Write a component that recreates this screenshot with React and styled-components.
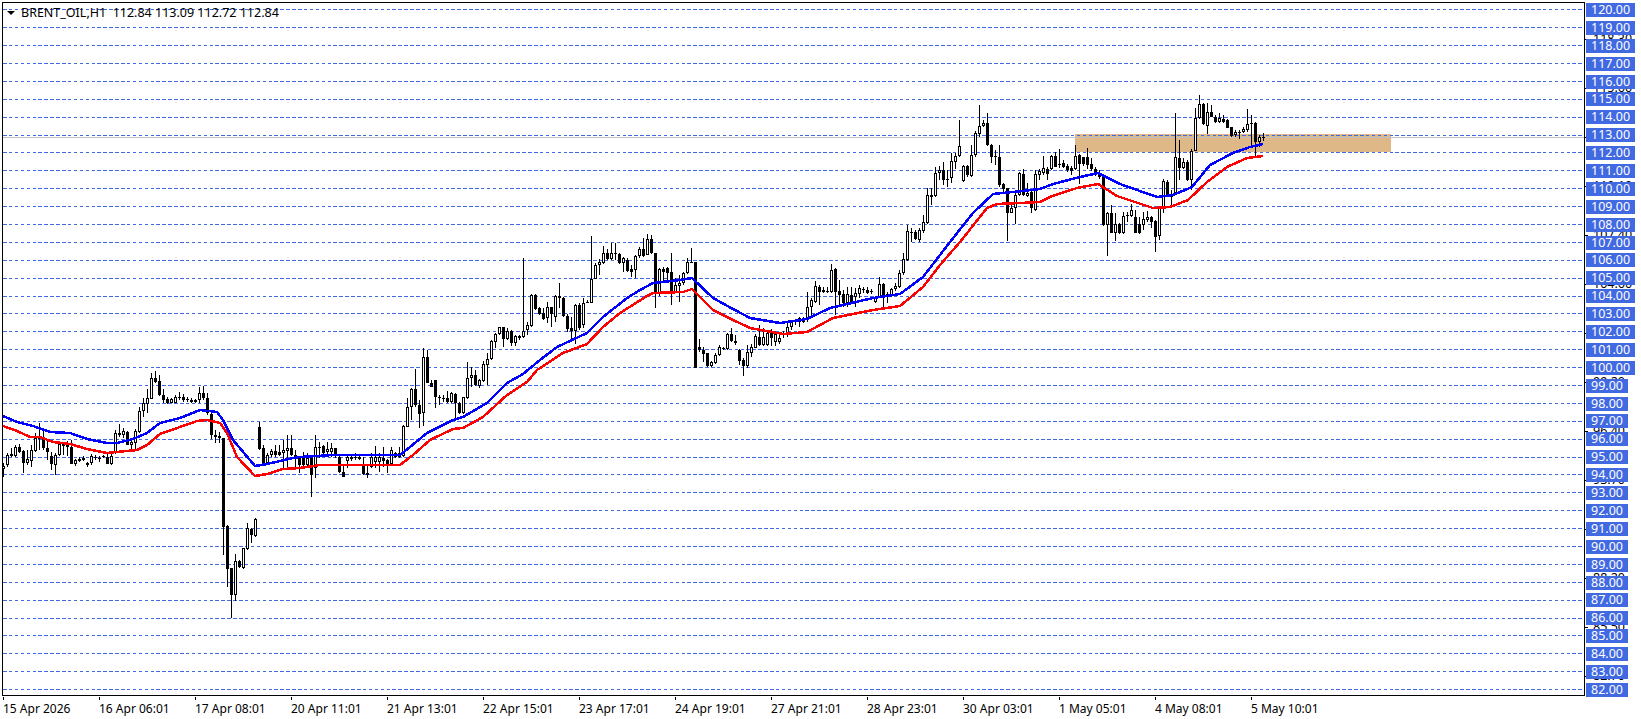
import React from 'react';
import styled, { createGlobalStyle } from 'styled-components';

const GlobalStyle = createGlobalStyle`
  html, body {
    margin: 0;
    padding: 0;
    background: #fff;
  }
`;

const Page = styled.div`
  width: 1641px;
  height: 719px;
  overflow: hidden;
  font-family: "Noto Sans", "Liberation Sans", sans-serif;
  font-size: 12.5px;
  color: #000;
`;

const ChartRow = styled.div`
  display: flex;
  align-items: flex-start;
  padding: 2px 0 0 2px;
`;

const ChartPane = styled.div`
  position: relative;
  flex: none;
  width: 1583px;
  height: 694px;
  box-sizing: border-box;
  border: 1px solid #000;
  overflow: hidden;
`;

const ChartSvg = styled.svg`
  display: block;
`;

const Legend = styled.div`
  position: absolute;
  top: 1px;
  left: 4px;
  display: flex;
  align-items: center;
  gap: 6px;
  height: 18px;
  line-height: 18px;
  white-space: pre;
`;

const LegendArrow = styled.span`
  width: 0;
  height: 0;
  border-left: 4px solid transparent;
  border-right: 4px solid transparent;
  border-top: 4px solid #000;
`;

const PriceAxis = styled.div`
  position: relative;
  flex: none;
  display: flex;
  flex-direction: column;
  justify-content: space-between;
  align-items: flex-start;
  box-sizing: border-box;
  height: 695px;
  margin-left: 1px;
  padding-top: 1px;
`;

const PriceLabel = styled.span`
  position: relative;
  height: 14px;
  line-height: 14px;
  padding: 0 5px;
  background: #4169e1;
  color: #fff;
`;

const ScaleValue = styled.span`
  position: absolute;
  left: 7px;
  line-height: 14px;
  transform: translateY(-7px);

  &::before {
    content: '';
    position: absolute;
    left: -8px;
    top: 7px;
    width: 3px;
    height: 1px;
    background: #000;
  }
`;

const TimeAxis = styled.div`
  display: flex;
  padding-left: 3px;
  font-size: 12px;
`;

const TimeCell = styled.div`
  flex: none;
  width: 96px;
  padding-top: 3px;
  line-height: 17px;
  white-space: nowrap;
  position: relative;

  &::before {
    content: '';
    position: absolute;
    left: 0;
    top: 0;
    width: 1px;
    height: 3px;
    background: #000;
  }
`;

const PRICES = Array.from({ length: 39 }, (_, i) => 120 - i);
const SCALE = ['118.30', '115.60', '112.90', '110.10', '107.40', '104.60', '101.90', '99.20', '96.40', '93.70', '90.90', '88.20', '85.50', '82.70'];
const TIMES = [
  '15 Apr 2026', '16 Apr 06:01', '17 Apr 08:01', '20 Apr 11:01', '21 Apr 13:01', '22 Apr 15:01', '23 Apr 17:01',
  '24 Apr 19:01', '27 Apr 21:01', '28 Apr 23:01', '30 Apr 03:01', '1 May 05:01', '4 May 08:01', '5 May 10:01',
];

// candles as [high, bodyTop, bodyBottom, low, up], read off the chart in thirds of a pixel below y0
const BLOCKS = [
  { start: 0, y0: 370, rows: [
    [280,288,296,320,1],[250,255,285,290,1],[235,253,258,260,0],[225,230,258,260,1],[222,230,245,248,0],[240,243,278,308,0],
    [240,268,278,285,1],[225,240,272,290,1],[190,205,243,245,1],[160,203,206,240,1],[180,208,235,240,0],[210,235,245,270,0],
    [245,258,282,300,0],[250,255,285,315,1],[218,222,255,258,1],[215,222,227,255,0],[212,225,230,258,0],[210,232,282,282,0],
    [268,270,282,288,1],[262,266,273,275,1],[258,263,270,272,1],[275,280,285,292,0],[253,258,278,285,1],[255,262,264,270,1],
    [258,263,265,275,1],[255,258,262,265,0],[250,260,282,282,0],[250,258,282,285,1],[180,188,245,252,1],[162,190,194,200,1],
    [175,183,195,205,1],[183,186,224,225,0],[212,215,225,240,1],[178,183,218,240,1],[110,123,185,190,1],[85,100,123,140,1],
    [58,85,103,130,1],[8,25,86,88,1],[3,25,37,40,0],[15,33,75,78,0],[58,75,90,100,0],[80,88,98,103,0],
    [83,87,98,100,1],[75,80,98,100,1],[65,80,83,90,0],[72,82,90,95,0],[80,87,90,95,1],[85,90,95,98,1],
    [86,90,95,98,1],[50,70,90,98,1],[48,70,85,90,0],[70,83,130,135,0],[130,133,195,208,0],[180,195,200,218,0],
    [185,197,203,220,0],[205,205,470,555,0],[465,468,596,650,0],[594,594,675,744,0],[553,574,675,692,1],[570,573,592,595,0],
    [533,535,595,597,1],[460,475,537,540,1],[475,477,495,518,0],[445,447,497,500,1],[155,170,237,240,0],[225,235,280,282,0],
    [250,255,280,282,1],[238,243,256,262,1],[225,243,255,260,0],[225,246,256,258,0],[210,240,248,295,1],[195,235,243,295,1],
    [195,235,255,258,0],[240,255,265,290,0],[260,265,285,310,0],
  ] },
  { start: 75, y0: 220, rows: [
    [695,715,735,740,0],[700,715,735,740,1],[708,712,765,830,0],[645,682,745,775,1],[665,680,683,715,1],[675,678,700,705,0],
    [665,688,695,705,1],[670,685,695,710,1],[685,685,702,715,0],[708,712,755,758,0],[735,755,770,772,0],[705,712,722,745,1],
    [705,712,716,722,1],[700,710,714,720,1],[705,712,716,720,1],[710,738,762,765,0],[735,760,764,775,1],[700,710,742,745,1],
    [678,710,725,745,1],[700,712,725,755,1],[680,715,722,740,0],[718,720,735,760,0],[680,690,732,735,1],[695,698,710,715,1],
    [680,700,710,715,0],[615,618,708,710,1],[535,562,620,622,1],[505,508,562,600,1],[448,508,555,560,0],[540,555,582,625,0],
    [385,412,580,618,1],[390,412,488,490,0],[480,488,500,502,0],[480,480,532,565,0],[525,532,535,555,1],[525,535,538,545,1],
    [512,535,545,548,0],[515,520,545,548,1],[518,522,548,595,0],[545,548,580,583,0],[530,532,580,583,1],[425,475,535,537,1],
    [440,465,473,500,1],[450,465,495,497,0],[478,480,497,505,1],[422,433,482,485,1],[400,418,434,495,1],[360,363,418,420,1],
    [340,343,365,385,1],[320,322,343,345,1],[320,322,358,382,0],[325,332,358,360,1],[330,333,368,378,0],[345,348,368,378,1],
    [345,348,355,360,0],[115,332,352,355,1],[305,316,330,345,1],[222,225,317,320,1],[222,225,266,270,0],[262,265,282,285,0],
    [265,280,296,300,0],[245,262,295,308,1],[262,262,282,322,0],[225,228,290,305,1],[190,228,235,265,0],[232,234,287,290,0],
    [283,287,328,335,0],[290,324,332,360,0],[253,255,332,372,1],[250,255,325,330,0],[235,248,315,325,1],[240,245,248,250,1],
    [48,178,248,250,1],[128,136,176,178,1],[118,126,136,165,1],[78,100,130,132,1],[88,100,118,120,0],[70,98,117,120,1],
    [70,100,103,120,1],[98,102,130,133,0],[112,115,130,155,1],[115,120,152,155,0],[135,148,155,172,0],[105,108,150,175,1],
    [80,87,108,115,1],[55,88,108,110,0],[42,58,104,106,1],[45,58,100,103,0],[98,98,222,265,0],[145,148,222,228,1],
    [140,148,155,190,0],[142,145,160,190,0],[100,155,220,255,0],[175,195,215,220,1],[165,190,197,245,1],[155,160,190,195,1],
    [115,127,160,163,1],[85,125,127,130,1],[125,125,445,445,0],
  ] },
  { start: 174, y0: 90, rows: [
    [748,770,780,785,0],[772,780,792,815,0],[790,790,828,832,0],[812,816,828,830,1],[790,795,820,822,1],[765,772,795,798,1],
    [770,775,777,780,1],[730,732,778,780,1],[715,732,752,755,0],[735,752,760,765,0],[778,780,812,825,0],[805,810,828,858,0],
    [765,787,828,835,1],[762,772,790,800,1],[733,738,773,775,1],[705,740,765,768,0],[715,742,765,768,1],[725,730,765,768,1],
    [718,725,745,768,0],[725,733,755,768,1],[735,745,755,762,1],[722,730,735,745,0],[700,710,735,740,1],[690,695,710,720,1],
    [688,692,695,705,1],[680,685,695,710,1],[680,690,695,700,0],[605,650,690,695,1],[625,630,650,675,1],[572,588,635,640,1],
    [585,592,605,645,0],[590,600,607,610,1],[590,603,605,608,1],[522,540,605,610,1],[535,537,605,675,0],[570,604,615,650,0],
    [600,612,640,650,0],[590,612,640,650,1],[590,615,635,640,0],[595,608,622,650,1],[585,595,612,625,1],[590,596,598,610,1],
    [592,600,608,612,0],[598,602,604,612,1],[618,622,635,640,1],[560,583,622,625,1],[580,583,615,655,0],[605,612,617,640,0],
    [595,598,615,620,1],[580,588,598,602,1],[540,548,590,595,1],[490,507,550,555,1],[405,423,510,512,1],[415,425,428,455,1],
    [420,425,447,450,0],[415,420,450,455,1],[375,397,424,428,1],[295,315,400,402,1],[295,316,320,345,1],[230,250,318,322,1],
    [228,240,250,270,1],[215,240,270,285,0],[240,266,270,290,0],[190,213,265,278,1],[190,198,215,238,1],[90,168,198,200,1],
    [225,228,272,275,1],[225,228,255,260,0],[165,195,258,260,1],[123,130,195,202,1],[45,108,132,140,1],[90,100,108,112,1],
    [70,100,165,168,0],[162,165,200,220,0],[180,198,202,225,0],[165,200,285,290,0],[280,283,298,310,0],[295,295,368,452,0],
    [340,355,368,370,1],[310,315,355,402,1],[245,250,315,318,1],
  ] },
  { start: 255, y0: 80, rows: [
    [268,283,345,348,0],[310,340,348,352,1],[330,335,385,400,0],[270,282,390,392,1],[268,272,284,300,1],[228,265,280,285,1],
    [262,268,282,300,0],[225,228,266,270,1],[215,228,260,262,0],[208,253,256,263,1],[240,248,260,265,0],[252,258,270,275,0],
    [258,265,272,285,0],[195,228,268,270,1],[222,225,252,312,0],[230,232,252,258,0],[205,232,255,268,0],[235,252,268,272,0],
    [262,268,280,288,0],[270,282,292,298,0],[285,290,435,437,0],[395,398,435,528,1],[375,400,458,460,0],[398,432,458,482,1],
    [428,432,458,462,0],[395,408,458,462,1],[395,405,408,425,1],[372,390,408,412,1],[390,410,458,460,0],[412,432,458,462,0],
    [395,418,435,450,1],[392,412,420,425,1],[408,412,425,445,0],[420,422,470,515,0],[380,385,468,480,1],[298,302,387,398,1],
    [300,305,348,350,0],[330,345,350,378,1],[98,232,340,345,1],[180,235,265,300,0],[235,245,265,268,1],[240,245,300,302,0],
    [208,212,300,330,1],[85,115,212,214,1],[45,73,115,118,1],[70,72,132,135,0],[68,96,138,162,1],[75,96,110,112,0],
    [105,110,125,128,0],[100,113,125,128,1],[105,118,125,128,0],[118,120,143,145,0],[140,142,168,172,0],[150,157,165,170,1],
    [150,157,159,178,1],[140,146,157,160,1],[88,132,150,155,1],[105,130,133,195,1],[125,128,185,232,0],[165,170,187,202,1],
    [158,172,174,182,1],
  ] },
];

const BARS = BLOCKS.flatMap(({ start, y0, rows }) =>
  rows.map((r, i) => {
    const [high, top, bottom, low] = r.slice(0, 4).map((v) => Math.round(y0 + v / 3));
    return { x: 3 + (start + i) * 4, high, top, bottom, low, up: r[4] === 1 };
  })
);

const BLUE_MA = '3,416 17,422 33,426 50,432 70,433 87,439 107,443 117,443 133,439 147,433 160,423 180,418 200,410 217,412 223,420 233,440 255,466 267,464 293,458 300,457 317,456 333,455 400,455 410,447 427,433 453,420 463,417 487,403 507,383 523,374 540,360 557,347 587,333 603,317 627,298 640,290 653,283 680,280 692,278 713,298 733,309 750,318 780,323 807,319 830,308 873,298 900,294 923,277 950,242 973,213 993,194 1013,192 1040,189 1053,184 1080,177 1098,173 1120,184 1157,197 1173,195 1192,187 1210,165 1233,153 1250,147 1263,144';
const RED_MA = '3,426 17,431 30,437 40,437 53,442 70,444 87,449 107,453 117,452 137,450 147,445 160,434 180,427 197,421 207,420 220,423 227,433 237,457 255,476 267,474 283,469 300,468 320,465 333,465 400,465 413,455 430,440 453,429 463,428 483,417 507,395 527,382 537,370 563,353 587,344 603,327 620,313 647,296 653,293 683,292 692,289 713,310 733,320 750,328 783,334 807,332 833,318 873,310 900,306 923,287 940,265 960,242 987,208 997,204 1020,203 1040,202 1050,197 1077,188 1098,184 1117,196 1153,208 1170,207 1188,200 1207,182 1227,167 1247,158 1263,156';

const gridY = (price) => Math.round(9.3 + (120 - price) * 17.89);

const Candle = ({ bar }) => {
  const h = Math.max(bar.bottom - bar.top, 1);
  return (
    <g>
      <rect x={bar.x} y={bar.high} width="1" height={bar.low - bar.high} fill="#000" />
      <rect x={bar.x - 1} y={bar.top} width="3" height={h} fill="#000" />
      {bar.up && h > 2 && <rect x={bar.x} y={bar.top + 1} width="1" height={h - 2} fill="#fff" />}
    </g>
  );
};

const Chart = () => (
  <ChartSvg width="1581" height="692" viewBox="3 3 1581 692" shapeRendering="crispEdges">
    <rect x="1075" y="134" width="316" height="18" fill="#deb887" />
    {PRICES.map((p) => (
      <line key={p} x1="3" x2="1584" y1={gridY(p) + 0.5} y2={gridY(p) + 0.5} stroke="#4169e1" strokeDasharray="3.5 2.4" />
    ))}
    <line x1="3" x2="1584" y1="137.5" y2="137.5" stroke="#c0c0c0" />
    {BARS.map((bar) => <Candle key={bar.x} bar={bar} />)}
    <polyline points={BLUE_MA} fill="none" stroke="#0000ff" strokeWidth="2.5" />
    <polyline points={RED_MA} fill="none" stroke="#ff0000" strokeWidth="2.5" />
  </ChartSvg>
);

const App = () => (
  <Page>
    <GlobalStyle />
    <ChartRow>
      <ChartPane>
        <Chart />
        <Legend>
          <LegendArrow />
          {'BRENT_OIL,H1  112.84 113.09 112.72 112.84'}
        </Legend>
      </ChartPane>
      <PriceAxis>
        {SCALE.map((v, i) => (
          <ScaleValue key={v} style={{ top: 37 + i * 49 }}>{v}</ScaleValue>
        ))}
        {PRICES.map((p) => (
          <PriceLabel key={p}>{p.toFixed(2)}</PriceLabel>
        ))}
      </PriceAxis>
    </ChartRow>
    <TimeAxis>
      {TIMES.map((t) => <TimeCell key={t}>{t}</TimeCell>)}
    </TimeAxis>
  </Page>
);

export default App;
